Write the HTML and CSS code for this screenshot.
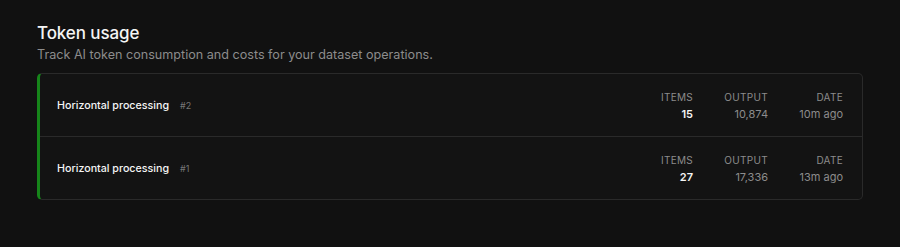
FILE: index.html
```html
<!DOCTYPE html>
<html>
<head>
<meta charset="utf-8">
<link rel="stylesheet" href="styles.css">
</head>
<body>
<section class="panel">
  <h1 class="title">Token usage</h1>
  <p class="subtitle">Track AI token consumption and costs for your dataset operations.</p>
  <div class="card">
    <div class="row">
      <div class="name"><span class="op">Horizontal processing</span><span class="num">#2</span></div>
      <div class="stats">
        <div class="stat"><div class="label">Items</div><div class="value strong">15</div></div>
        <div class="stat"><div class="label">Output</div><div class="value">10,874</div></div>
        <div class="stat"><div class="label">Date</div><div class="value">10m ago</div></div>
      </div>
    </div>
    <div class="row">
      <div class="name"><span class="op">Horizontal processing</span><span class="num">#1</span></div>
      <div class="stats">
        <div class="stat"><div class="label">Items</div><div class="value strong">27</div></div>
        <div class="stat"><div class="label">Output</div><div class="value">17,336</div></div>
        <div class="stat"><div class="label">Date</div><div class="value">13m ago</div></div>
      </div>
    </div>
  </div>
</section>
</body>
</html>
```
FILE: styles.css
```css
html, body {
  margin: 0;
  padding: 0;
  background: #111111;
  font-family: Inter, "Noto Sans", sans-serif;
  color: #f2f2f2;
}
.panel {
  padding: 22px 37px 0 37px;
}
.title {
  margin: 0;
  font-size: 17px;
  font-weight: 500;
  line-height: 22px;
  color: #f5f5f5;
  letter-spacing: -0.1px;
}
.subtitle {
  margin: 2px 0 0 0;
  font-size: 12.6px;
  line-height: 18px;
  color: #8c8c8c;
}
.card {
  margin-top: 9px;
  border: 1px solid #2a2a2a;
  border-left: 3px solid #16851a;
  border-radius: 5px;
  background: #131313;
}
.row {
  display: flex;
  align-items: center;
  justify-content: space-between;
  height: 62px;
  padding: 0 19px 0 17px;
}
.row + .row {
  border-top: 1px solid #2a2a2a;
}
.name {
  display: flex;
  align-items: baseline;
  gap: 11px;
}
.op {
  font-size: 10.7px;
  font-weight: 500;
  color: #f5f5f5;
}
.num {
  font-size: 9px;
  color: #777;
}
.stats {
  display: flex;
  gap: 20px;
}
.stat {
  width: 55px;
  text-align: right;
}
.label {
  font-size: 10px;
  text-transform: uppercase;
  letter-spacing: 0.3px;
  color: #8c8c8c;
  line-height: 14px;
}
.value {
  margin-top: 3px;
  font-size: 11px;
  line-height: 14px;
  color: #8c8c8c;
}
.value.strong {
  color: #f5f5f5;
  font-weight: 600;
}
```
